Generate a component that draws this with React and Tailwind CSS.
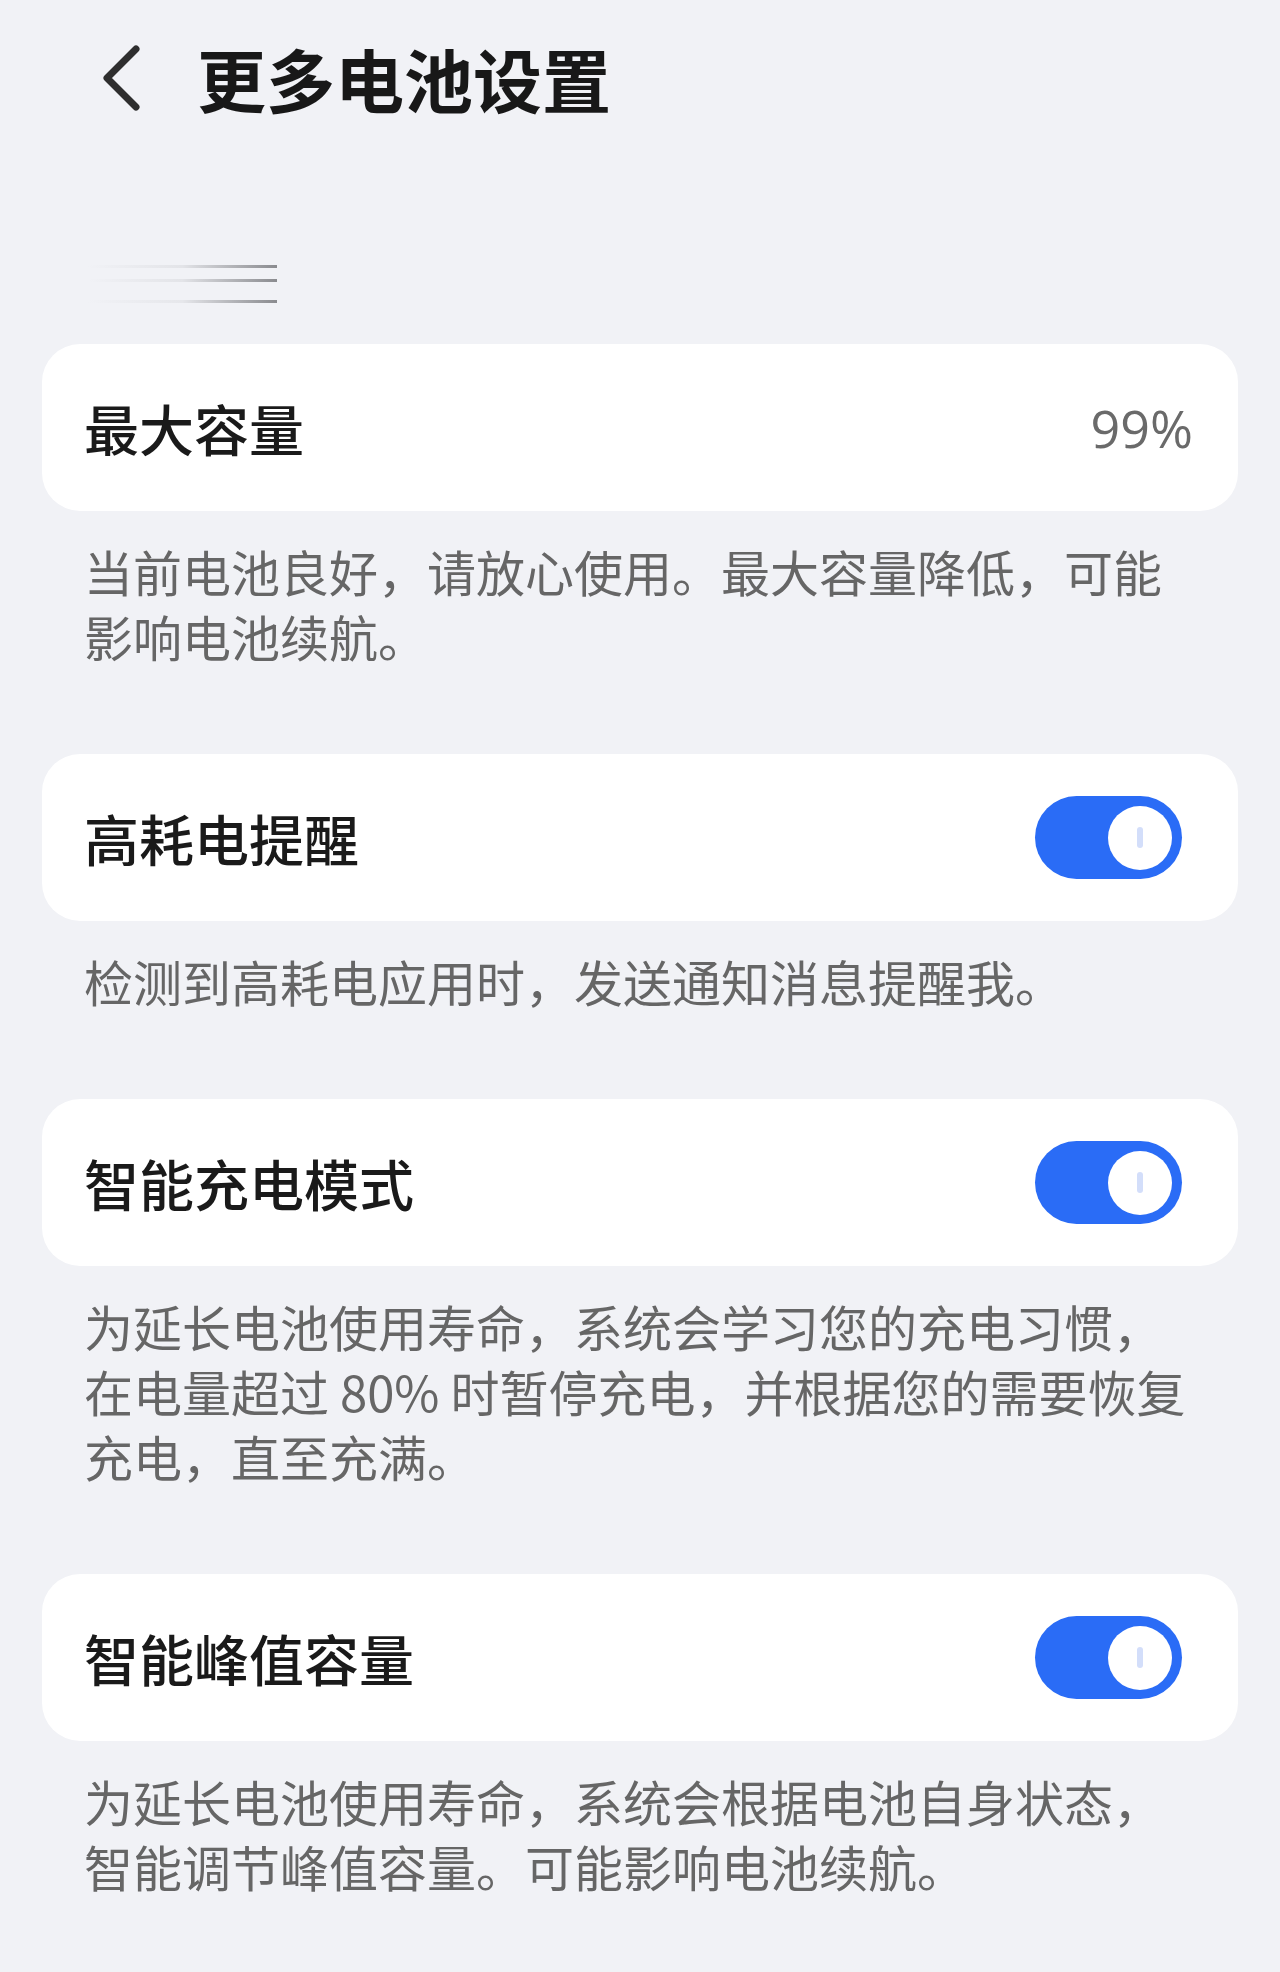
const items = [
  {
    id: "capacity",
    title: "最大容量",
    value: "99%",
    desc: ["当前电池良好，请放心使用。最大容量降低，可能", "影响电池续航。"],
  },
  {
    id: "highPower",
    title: "高耗电提醒",
    toggle: true,
    desc: ["检测到高耗电应用时，发送通知消息提醒我。"],
  },
  {
    id: "smartCharge",
    title: "智能充电模式",
    toggle: true,
    desc: [
      "为延长电池使用寿命，系统会学习您的充电习惯，",
      "在电量超过 80% 时暂停充电，并根据您的需要恢复",
      "充电，直至充满。",
    ],
  },
  {
    id: "peak",
    title: "智能峰值容量",
    toggle: true,
    desc: ["为延长电池使用寿命，系统会根据电池自身状态，", "智能调节峰值容量。可能影响电池续航。"],
  },
];

function Toggle() {
  return (
    <div className="w-[147px] h-[83px] rounded-full bg-[#2a6cf6] flex items-center justify-end pr-[10px] mr-[11px]">
      <div className="w-[64px] h-[64px] rounded-full bg-white flex items-center justify-center">
        <span className="w-[6px] h-[21px] rounded-full bg-[#d3defa]" />
      </div>
    </div>
  );
}

export default function App() {
  return (
    <div
      className="w-[1280px] min-h-[1972px] bg-[#f1f2f6] px-[42px]"
      style={{ fontFamily: '"Noto Sans CJK SC", "Noto Sans", sans-serif' }}
    >
      {/* header */}
      <div className="h-[166px] pb-[10px] flex items-center">
        <svg width="40" height="66" viewBox="0 0 40 66" className="ml-[59px] text-[#2e2e2e]">
          <polyline
            points="35,4 6,33 35,62"
            fill="none"
            stroke="currentColor"
            strokeWidth="7"
            strokeLinecap="round"
            strokeLinejoin="round"
          />
        </svg>
        <h1 className="ml-[56px] text-[69px] leading-none font-bold text-[#181818]">更多电池设置</h1>
      </div>

      {/* blurred strip */}
      <div className="h-[178px] pt-[99px] pl-[46px]">
        <div className="w-[189px] h-[3px] bg-gradient-to-r from-transparent via-[#e3e4e8] to-[#8a8b8f]" />
        <div className="w-[189px] h-[3px] mt-[11px] bg-gradient-to-r from-transparent via-[#e3e4e8] to-[#8a8b8f]" />
        <div className="w-[189px] h-[3px] mt-[18px] bg-gradient-to-r from-transparent via-[#e6e7eb] to-[#8a8b8f]" />
      </div>

      {items.map((item) => (
        <section key={item.id}>
          <div className="h-[167px] rounded-[38px] bg-white flex items-center justify-between pl-[42px] pr-[45px]">
            <span className="text-[55px] leading-none font-medium text-[#1a1a1a]">{item.title}</span>
            {item.toggle ? (
              <Toggle />
            ) : (
              <span
                className="text-[52px] leading-none text-[#6a6a6a]"
                style={{ fontFamily: '"Open Sans", "Noto Sans", sans-serif' }}
              >
                {item.value}
              </span>
            )}
          </div>
          <p className="pt-[27px] pb-[86px] pl-[42px] text-[49px] leading-[65px] text-[#666666]">
            {item.desc.map((line, i) => (
              <span key={i} className="block h-[65px] whitespace-nowrap">
                {line}
              </span>
            ))}
          </p>
        </section>
      ))}
    </div>
  );
}
